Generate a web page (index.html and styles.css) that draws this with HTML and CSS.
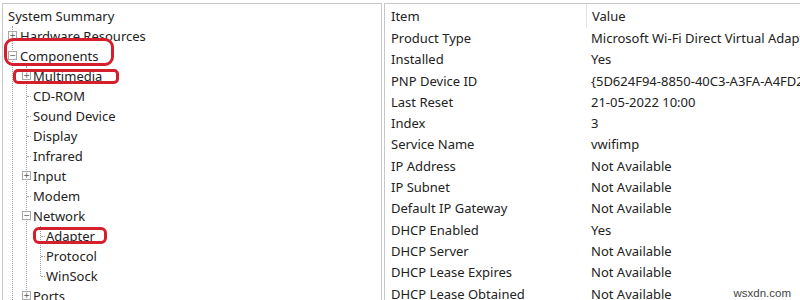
FILE: index.html
```html
<!DOCTYPE html>
<html lang="en">
<head>
    <meta charset="UTF-8">
    <title>System Information</title>
    <link rel="stylesheet" href="styles.css">
</head>
<body>
    <div class="window">
        <div class="tree-pane">
            <div class="tree">
                <div class="node root">System Summary</div>
                <div class="group l1">
                    <div class="node"><span class="exp">+</span>Hardware Resources</div>
                    <div class="node"><span class="exp">&minus;</span>Components</div>
                    <div class="group l2">
                        <div class="node"><span class="exp">+</span>Multimedia</div>
                        <div class="node leaf">CD-ROM</div>
                        <div class="node leaf">Sound Device</div>
                        <div class="node leaf">Display</div>
                        <div class="node leaf">Infrared</div>
                        <div class="node"><span class="exp">+</span>Input</div>
                        <div class="node leaf">Modem</div>
                        <div class="node"><span class="exp">&minus;</span>Network</div>
                        <div class="group l3">
                            <div class="node leaf">Adapter</div>
                            <div class="node leaf">Protocol</div>
                            <div class="node leaf last">WinSock</div>
                        </div>
                        <div class="node"><span class="exp">+</span>Ports</div>
                    </div>
                </div>

                <!-- red highlight marks drawn over the tree -->
                <div class="mark mark-components"></div>
                <div class="mark mark-multimedia"></div>
                <div class="mark mark-adapter"></div>
            </div>
        </div>

        <div class="list-pane">
            <div class="row head">
                <div class="cell item">Item</div>
                <div class="cell value">Value</div>
            </div>
            <div class="row"><div class="cell item">Product Type</div><div class="cell value">Microsoft Wi-Fi Direct Virtual Adapter #2</div></div>
            <div class="row"><div class="cell item">Installed</div><div class="cell value">Yes</div></div>
            <div class="row"><div class="cell item">PNP Device ID</div><div class="cell value">{5D624F94-8850-40C3-A3FA-A4FD2080BAF3}\VWIFIMP_WFD\4&amp;</div></div>
            <div class="row"><div class="cell item">Last Reset</div><div class="cell value">21-05-2022 10:00</div></div>
            <div class="row"><div class="cell item">Index</div><div class="cell value">3</div></div>
            <div class="row"><div class="cell item">Service Name</div><div class="cell value">vwifimp</div></div>
            <div class="row"><div class="cell item">IP Address</div><div class="cell value">Not Available</div></div>
            <div class="row"><div class="cell item">IP Subnet</div><div class="cell value">Not Available</div></div>
            <div class="row"><div class="cell item">Default IP Gateway</div><div class="cell value">Not Available</div></div>
            <div class="row"><div class="cell item">DHCP Enabled</div><div class="cell value">Yes</div></div>
            <div class="row"><div class="cell item">DHCP Server</div><div class="cell value">Not Available</div></div>
            <div class="row"><div class="cell item">DHCP Lease Expires</div><div class="cell value">Not Available</div></div>
            <div class="row"><div class="cell item">DHCP Lease Obtained</div><div class="cell value">Not Available</div></div>
        </div>
    </div>

    <div class="watermark">wsxdn.com</div>
</body>
</html>
```

FILE: styles.css
```css
html, body {
    margin: 0;
    height: 100%;
    overflow: hidden;
}

body {
    background: #fff;
    font-family: 'Noto Sans', 'Open Sans', sans-serif;
    font-size: 13px;
    color: #222;
    position: relative;
}

.window {
    display: flex;
    gap: 2px;
    padding: 3px 0 0 2px;
    height: 100%;
    box-sizing: border-box;
}

/* left tree */
.tree-pane {
    width: 378px;
    flex: none;
    border: 1px solid #c8c8c8;
    border-bottom: none;
}

.tree {
    position: relative;
    padding-top: 2px;
}

.node {
    position: relative;
    height: 20px;
    line-height: 20px;
    white-space: nowrap;
}

.root {
    padding-left: 5px;
}

.group {
    border-left: 1px dotted #a0a0a0;
}

.group.l1 {
    margin-left: 9px;
}

.group.l1 > .node {
    padding-left: 7px;
}

.group.l2,
.group.l3 {
    margin-left: 13px;
}

.group.l2 > .node {
    padding-left: 6px;
}

.group.l3 > .node {
    padding-left: 5px;
}

.leaf::before {
    content: "";
    position: absolute;
    left: 0;
    top: 10px;
    width: 4px;
    border-top: 1px dotted #a0a0a0;
}

.last::after {
    content: "";
    position: absolute;
    left: -1px;
    top: 11px;
    bottom: 0;
    width: 1px;
    background: #fff;
}

.exp {
    position: absolute;
    left: -5px;
    top: 5px;
    width: 7px;
    height: 7px;
    border: 1px solid #a8a8a8;
    background: #fff;
    color: #555;
    font-family: 'DejaVu Sans', sans-serif;
    font-size: 8px;
    line-height: 7px;
    text-align: center;
}

/* red annotation marks */
.mark {
    position: absolute;
    border: 3px solid #d3202c;
    box-sizing: border-box;
}

.mark-components {
    left: 1px;
    top: 34px;
    width: 110px;
    height: 28px;
    border-radius: 9px;
}

.mark-multimedia {
    left: 10px;
    top: 65px;
    width: 106px;
    height: 15px;
    border-radius: 5px;
}

.mark-adapter {
    left: 30px;
    top: 223px;
    width: 74px;
    height: 17px;
    border-radius: 6px;
}

/* right list */
.list-pane {
    flex: 1;
    border-top: 1px solid #c8c8c8;
    border-left: 1px solid #c8c8c8;
    overflow: hidden;
}

.row {
    display: flex;
    height: 21.3px;
    line-height: 21.3px;
    white-space: nowrap;
}

.row.head {
    height: 24px;
    line-height: 24px;
}

.cell.item {
    width: 195px;
    flex: none;
    padding-left: 6px;
}

.cell.value {
    padding-left: 5px;
}

.head .cell.item {
    border-right: 1px solid #e4e4e4;
}

.watermark {
    position: absolute;
    right: 9px;
    bottom: 0;
    font-family: 'Liberation Sans', sans-serif;
    font-size: 11.5px;
    color: #444;
    background: #fff;
    line-height: 14px;
}
```
